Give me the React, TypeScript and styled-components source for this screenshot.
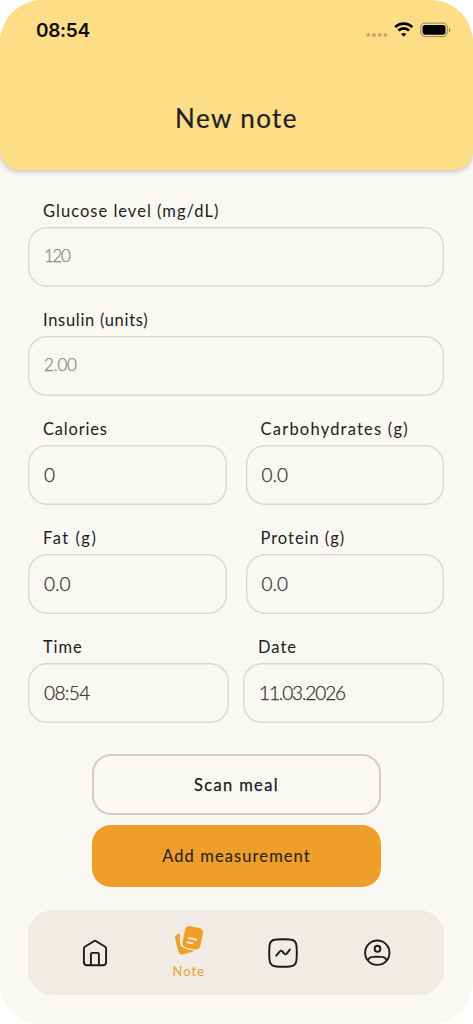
import React from 'react';
import styled, { createGlobalStyle } from 'styled-components';

const GlobalStyle = createGlobalStyle`
  * { box-sizing: border-box; }
  body { margin: 0; background: #ffffff; }
  #root { font-family: Lato, 'Noto Sans', sans-serif; color: #1d1e1e; }
`;

const Screen = styled.main`
  display: flex;
  flex-direction: column;
  width: 473px;
  height: 1024px;
  overflow: hidden;
  border-radius: 42px;
  background: #f9f8f3;
`;

const Header = styled.header`
  display: flex;
  flex-direction: column;
  height: 170px;
  flex: none;
  border-radius: 0 0 20px 20px;
  background: #fedd87;
  box-shadow: 0 2px 5px rgba(0, 0, 0, 0.2);
`;

const StatusBar = styled.div`
  display: flex;
  align-items: center;
  justify-content: space-between;
  height: 60px;
  padding: 0 22px 0 36px;
`;

const Clock = styled.span`
  padding-top: 2px;
  font: 600 19px/24px Inter, sans-serif;
  letter-spacing: -0.3px;
  color: #0c0c08;
`;

const Title = styled.h1<{ $tracking: number }>`
  margin: 41px 0 0;
  font-size: 26px;
  font-weight: 400;
  line-height: 34px;
  text-align: center;
  -webkit-text-stroke: 0.2px currentColor;
  letter-spacing: ${(p) => p.$tracking}px;
`;

const Form = styled.form`
  display: flex;
  flex-direction: column;
  padding: 31px 29px 0 28px;
`;

const Row = styled.div<{ $gap?: number }>`
  display: flex;
  gap: ${(p) => p.$gap ?? 0}px;
  height: 109px;
`;

const FieldBox = styled.label`
  display: flex;
  flex: 1;
  flex-direction: column;
`;

const Label = styled.span<{ $tracking: number }>`
  height: 26px;
  padding-left: 15px;
  font-size: 16.5px;
  line-height: 20px;
  white-space: nowrap;
  letter-spacing: ${(p) => p.$tracking}px;
`;

const Value = styled.span<{ $muted?: boolean; $tracking: number }>`
  display: flex;
  align-items: center;
  height: 60px;
  padding: 0 16px ${(p) => (p.$muted ? 4 : 2)}px;
  border-radius: 19px;
  box-shadow: inset 0 0 0 1.4px #dcd6d0;
  font-family: 'Lato Light', Lato, sans-serif;
  font-weight: 300;
  font-size: ${(p) => (p.$muted ? 17 : 19)}px;
  color: ${(p) => (p.$muted ? '#85858c' : '#303031')};
  -webkit-text-stroke: 0.25px currentColor;
  letter-spacing: ${(p) => p.$tracking}px;
`;

const Actions = styled.div`
  display: flex;
  flex-direction: column;
  gap: 10px;
  width: 289px;
  margin: 8px 0 0 92px;
`;

const Button = styled.button<{ $primary?: boolean; $tracking: number }>`
  height: ${(p) => (p.$primary ? 62 : 61)}px;
  padding: 0;
  border: ${(p) => (p.$primary ? 'none' : '2px solid #d3ccc4')};
  border-radius: 19px;
  background: ${(p) => (p.$primary ? '#ef9f29' : 'transparent')};
  color: ${(p) => (p.$primary ? '#2a241a' : '#1b1b1c')};
  font: 400 16.5px Lato, sans-serif;
  -webkit-text-stroke: ${(p) => (p.$primary ? 0.1 : 0.25)}px currentColor;
  letter-spacing: ${(p) => p.$tracking}px;
`;

const Nav = styled.nav`
  display: grid;
  grid-template-columns: repeat(4, 94.3px);
  justify-content: center;
  height: 85px;
  margin: 23px 29px 0 28px;
  border-radius: 25px;
  background: #f0ebe4;
`;

const NavItem = styled.a<{ $active?: boolean }>`
  display: flex;
  flex-direction: column;
  align-items: center;
  justify-content: center;
  gap: 7px;
  color: ${(p) => (p.$active ? '#ef9f29' : '#1b1b1b')};
  font-size: 13px;
  line-height: 17px;
  letter-spacing: 1px;
`;

const StatusIcons = () => (
  <svg width="86" height="20" viewBox="365 20 86 20">
    <g fill="#000" fillOpacity=".22">
      {[368.3, 374, 379.7, 385.3].map((x) => (
        <circle key={x} cx={x} cy="34.9" r="2" />
      ))}
    </g>
    <g fill="none" stroke="#000" strokeWidth="2.7">
      <path d="M395.2 27.1a12.2 12.2 0 0 1 17.1 0" />
      <path d="M398.4 30.5a7.6 7.6 0 0 1 10.7 0" />
    </g>
    <path d="M403.7 36.7l-2.6-2.6a3.8 3.8 0 0 1 5.2 0z" />
    <rect x="420.7" y="23.1" width="26.6" height="13.5" rx="4.3" fill="none" stroke="#000" strokeOpacity=".4" />
    <rect x="422.5" y="24.9" width="23" height="9.9" rx="2.8" />
    <path d="M449 27.8v4.2q1.3-.6 1.3-2.1t-1.3-2.1z" fillOpacity=".5" />
  </svg>
);

const HomeIcon = () => (
  <svg width="30" height="30" viewBox="0 0 30 30" fill="none" stroke="currentColor" strokeWidth="1.9" strokeLinejoin="round">
    <path d="M3.9 10.600q0-1.200 1-1.800L13.800 3.200q1.200-.8 2.400 0l8.900 5.600q1 .6 1 1.800v13.400q0 3.200-3.200 3.200H7.100q-3.200 0-3.200-3.200z" />
    <path d="M10.900 27V16.200q0-1.300 1.300-1.300h5.400q1.300 0 1.300 1.300V27" />
  </svg>
);

const NoteIcon = () => (
  <svg width="30" height="30" viewBox="0 0 30 30">
    <path
      d="M6 7.600L3.800 8.200Q.2 9.300 1.200 13.200l3 12q1.100 4 5.100 3l7-1.700q2.300-.6 3.700-1.900l-7.700-1.700q-7.600-1.700-6.300-9.300z"
      fill="currentColor"
    />
    <rect x="9.600" y=".8" width="18.300" height="22" rx="4.800" transform="rotate(12 18.700 11.800)" fill="currentColor" />
    <path d="M14.600 12l7.600 1.700M13.600 16.300l4.800 1" stroke="#f0ebe4" strokeWidth="1.900" strokeLinecap="round" />
  </svg>
);

const ChartIcon = () => (
  <svg width="30" height="30" viewBox="0 0 30 30" fill="none" stroke="currentColor" strokeWidth="1.900" strokeLinecap="round" strokeLinejoin="round">
    <path d="M8.200 1.500Q15 .9 21.800 1.500Q28.200 1.800 28.500 8.200Q29.100 15 28.500 21.800Q28.200 28.200 21.800 28.500Q15 29.100 8.200 28.500Q1.800 28.200 1.500 21.800Q.9 15 1.500 8.200Q1.800 1.800 8.200 1.500z" />
    <path d="M8.200 17.600l3.700-4.300q1.200-1.300 2.500 0l1.900 2.400q1.200 1.400 2.400 0l3.200-4.100" />
  </svg>
);

const ProfileIcon = () => (
  <svg width="30" height="30" viewBox="0 0 30 30" fill="none" stroke="currentColor" strokeWidth="1.900">
    <circle cx="15.300" cy="14.700" r="12.200" />
    <rect x="12.700" y="7.700" width="5.600" height="6" rx="2.800" />
    <path d="M5.900 22.500q1.200-3.500 5.100-3.600 4.300-.4 8.600 0 3.900.1 5.100 3.600" />
  </svg>
);

interface FieldProps {
  label: string;
  value: string;
  muted?: boolean;
  labelTracking?: number;
  valueTracking?: number;
}

const Field = ({ label, value, muted, labelTracking = 0.3, valueTracking = 0 }: FieldProps) => (
  <FieldBox>
    <Label $tracking={labelTracking}>{label}</Label>
    <Value $muted={muted} $tracking={valueTracking}>{value}</Value>
  </FieldBox>
);

export default function App() {
  return (
    <>
      <GlobalStyle />
      <Screen>
        <Header>
          <StatusBar>
            <Clock>08:54</Clock>
            <StatusIcons />
          </StatusBar>
          <Title $tracking={1.4}>New note</Title>
        </Header>
        <Form>
          <Row><Field label="Glucose level (mg/dL)" value="120" muted labelTracking={1.02} valueTracking={-1.4} /></Row>
          <Row><Field label="Insulin (units)" value="2.00" muted labelTracking={0.7} valueTracking={-0.2} /></Row>
          <Row $gap={19}>
            <Field label="Calories" value="0" labelTracking={0.8} />
            <Field label="Carbohydrates (g)" value="0.0" labelTracking={1.22} />
          </Row>
          <Row $gap={19}>
            <Field label="Fat (g)" value="0.0" labelTracking={1.5} />
            <Field label="Protein (g)" value="0.0" labelTracking={0.97} />
          </Row>
          <Row $gap={14}>
            <Field label="Time" value="08:54" labelTracking={0.9} valueTracking={-0.6} />
            <Field label="Date" value="11.03.2026" labelTracking={1} valueTracking={-1.1} />
          </Row>
        </Form>
        <Actions>
          <Button type="button" $tracking={1.35}>Scan meal</Button>
          <Button type="button" $primary $tracking={1.1}>Add measurement</Button>
        </Actions>
        <Nav>
          <NavItem><HomeIcon /></NavItem>
          <NavItem $active><NoteIcon />Note</NavItem>
          <NavItem><ChartIcon /></NavItem>
          <NavItem><ProfileIcon /></NavItem>
        </Nav>
      </Screen>
    </>
  );
}
